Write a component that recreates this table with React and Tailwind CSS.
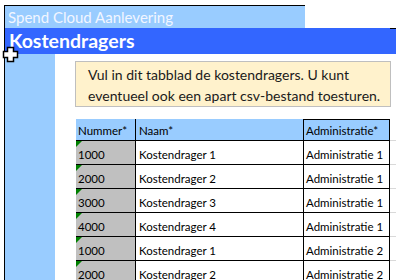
import React from 'react';

const rows = [
  ['1000', 'Kostendrager 1', 'Administratie 1'],
  ['2000', 'Kostendrager 2', 'Administratie 1'],
  ['3000', 'Kostendrager 3', 'Administratie 1'],
  ['4000', 'Kostendrager 4', 'Administratie 1'],
  ['1000', 'Kostendrager 1', 'Administratie 2'],
  ['2000', 'Kostendrager 2', 'Administratie 2'],
];

function CrossCursor() {
  return (
    <svg className="absolute left-[2px] top-[46px]" width="17" height="17" viewBox="0 0 17 17">
      <polygon
        points="5.5,1.5 11.5,1.5 11.5,5.5 15.5,5.5 15.5,11.5 11.5,11.5 11.5,15.5 5.5,15.5 5.5,11.5 1.5,11.5 1.5,5.5 5.5,5.5"
        fill="#fff"
        stroke="#000"
        strokeWidth="1.5"
      />
    </svg>
  );
}

function Row({ num, naam, admin }) {
  return (
    <div className="flex h-[24px]">
      <div className="relative shrink-0 w-[60px] bg-[#c0c0c0] border-r border-b border-black pl-[2px] pb-[3px] flex items-end whitespace-nowrap">
        <span className="absolute left-0 top-0 w-0 h-0 border-t-[6px] border-t-[#008000] border-r-[6px] border-r-transparent" />
        {num}
      </div>
      <div className="shrink-0 w-[168px] border-r border-b border-black pl-[3px] pb-[3px] flex items-end whitespace-nowrap">{naam}</div>
      <div className="shrink-0 w-[86px] border-r border-b border-black pl-[2px] pb-[3px] flex items-end whitespace-nowrap overflow-hidden">{admin}</div>
      <div className="flex-1 border-b border-[#d9d9d9]" />
    </div>
  );
}

export default function App() {
  return (
    <div className="relative w-[396px] h-[280px] overflow-hidden bg-white text-black font-['Lato',sans-serif]">
      <div className="h-[5px]" />
      <div className="pl-[4px]">
        <div className="w-[301px] h-[23px] border-l border-t border-black bg-[#99ccff] text-[#f2f6ff] text-[15px] leading-[22px] pl-[3px]">
          Spend Cloud Aanlevering
        </div>
      </div>
      <div className="pl-[4px]">
        <div className="relative h-[26px] border-l border-black bg-[#3366ff] text-white font-bold text-[19.5px] leading-[25px] pl-[4px]">
          Kostendragers
          <span className="absolute right-0 top-0 w-[6px] h-px bg-black" />
        </div>
      </div>
      <div className="flex pl-[4px] h-[226px]">
        <div className="w-[51px] border-l border-black bg-[#99ccff]" />
        <div className="w-[20px]" />
        <div className="flex-1 flex flex-col">
          <div className="mt-[7px] w-[316px] h-[50px] border border-[#bfbfbf] bg-[#fff2cc] text-[14px] leading-[21px] pl-[12px] pt-[2px] text-[#1a1a1a]">
            <div>Vul in dit tabblad de kostendragers. U kunt</div>
            <div>eventueel ook een apart csv-bestand toesturen.</div>
          </div>
          <div className="mt-[12px] text-[11.5px] leading-[13px] pl-px">
            <div className="flex h-[22px]">
              <div className="shrink-0 w-[60px] bg-[#99ccff] border-r border-b border-black pl-[2px] pb-[3px] flex items-end whitespace-nowrap">Nummer*</div>
              <div className="shrink-0 w-[168px] bg-[#99ccff] border-r border-b border-black pl-[3px] pb-[3px] flex items-end whitespace-nowrap">Naam*</div>
              <div className="shrink-0 w-[86px] bg-[#99ccff] border-r border-t border-b border-black pl-[2px] pb-[3px] flex items-end whitespace-nowrap overflow-hidden">Administratie*</div>
              <div className="flex-1 border-b border-[#d9d9d9]" />
            </div>
            {rows.map((r, i) => (
              <Row key={i} num={r[0]} naam={r[1]} admin={r[2]} />
            ))}
          </div>
        </div>
      </div>
      <CrossCursor />
    </div>
  );
}
